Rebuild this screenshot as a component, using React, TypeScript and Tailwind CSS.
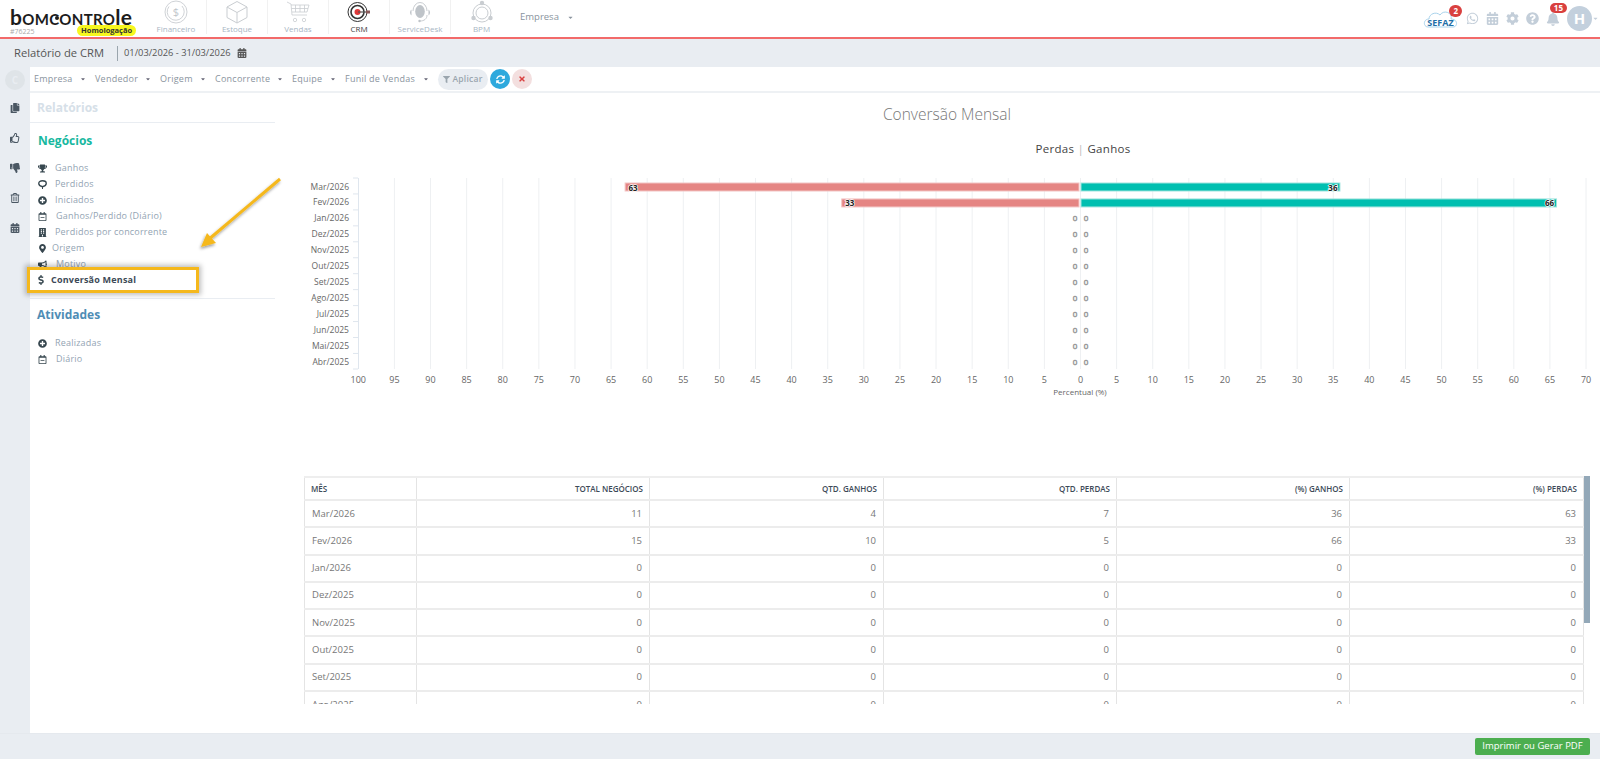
import {
  FaBell, FaBuilding, FaBullhorn, FaCalendarAlt, FaCog, FaCopy, FaDollarSign, FaFilter, FaMapMarkerAlt,
  FaPlusCircle, FaQuestionCircle, FaRegCalendarMinus, FaRegThumbsUp, FaRegTrashAlt,
  FaSyncAlt, FaThumbsDown, FaTimes, FaTrophy, FaWhatsapp, FaCaretDown,
} from "react-icons/fa";

function CoinIcon() {
  return (
    <svg width="24" height="24" viewBox="0 0 24 24" fill="none" stroke="#c9cdd1" strokeWidth="0.9">
      <circle cx="12" cy="12" r="11" />
      <path d="M5 6.5 A8.5 8.5 0 1 0 18 6" />
      <text x="12" y="16" textAnchor="middle" fontSize="11" fill="#c0c5ca" stroke="none">$</text>
    </svg>
  );
}

function BoxIcon() {
  return (
    <svg width="24" height="24" viewBox="0 0 24 24" fill="none" stroke="#c9cdd1" strokeWidth="1">
      <path d="M12 1.5 L22 7 V17.5 L12 23 L2 17.5 V7 Z M2 7 L12 12.5 L22 7 M12 12.5 V23" />
    </svg>
  );
}

function CartIcon() {
  return (
    <svg width="24" height="24" viewBox="0 0 24 24" fill="none" stroke="#c9cdd1" strokeWidth="0.8">
      <path d="M1 2 L5 4 L6 15 H21 M5 5 H23 L21 12 H6 M9.5 5 V12 M14 5 V12 M18.5 5 V12 M5.5 8.5 H22" />
      <circle cx="9" cy="20" r="1.7" />
      <circle cx="18" cy="20" r="1.7" />
    </svg>
  );
}

function TargetIcon() {
  return (
    <svg width="24" height="24" viewBox="0 0 24 24" fill="none">
      <circle cx="10.5" cy="12" r="9.5" stroke="#333" strokeWidth="1" />
      <circle cx="10.5" cy="12" r="6.5" stroke="#333" strokeWidth="1.6" />
      <circle cx="10.5" cy="12" r="3" fill="#e0393a" />
      <path d="M11 12 H21" stroke="#555" strokeWidth="1.2" />
      <path d="M19 10.5 H23 V13.5 H19 Z" fill="#8a5a5a" />
    </svg>
  );
}

function HeadsetIcon() {
  return (
    <svg width="24" height="24" viewBox="0 0 24 24" fill="none">
      <ellipse cx="12" cy="11.5" rx="4.8" ry="6.5" fill="#bfc4c9" />
      <path d="M5 11 A7 8.5 0 0 1 19 11" stroke="#c9cdd1" strokeWidth="1" />
      <path d="M3.5 9.5 C1.5 11 1.5 14 3.5 15.5 Z M20.5 9.5 C22.5 11 22.5 14 20.5 15.5 Z" fill="#bfc4c9" />
      <path d="M19 15 C19 19 16 21 12 21" stroke="#c9cdd1" strokeWidth="1" />
      <circle cx="11.5" cy="21" r="1.2" fill="#bfc4c9" />
    </svg>
  );
}

function RingIcon() {
  return (
    <svg width="24" height="24" viewBox="0 0 24 24" fill="none" stroke="#c9cdd1">
      <circle cx="12" cy="13" r="9" strokeWidth="1" />
      <circle cx="12" cy="13" r="6" strokeWidth="1" />
      <circle cx="12" cy="3" r="2.2" fill="#c9cdd1" stroke="none" />
      <circle cx="3.5" cy="18" r="2.2" fill="#c9cdd1" stroke="none" />
      <circle cx="20.5" cy="18" r="2.2" fill="#c9cdd1" stroke="none" />
    </svg>
  );
}

function BalloonIcon({ className }: { className?: string }) {
  return (
    <svg className={className} viewBox="0 0 12 12" fill="none" stroke="currentColor" strokeWidth="1.8">
      <path d="M6 9 C2.5 8 1 6.5 1 4.5 C1 2.5 3 1 6 1 C9 1 11 2.5 11 4.5 C11 6.5 9.5 8 6 9 Z" />
      <path d="M6 9 V12" strokeWidth="1.4" />
    </svg>
  );
}

const modules = [
  { label: "Financeiro", icon: CoinIcon },
  { label: "Estoque", icon: BoxIcon },
  { label: "Vendas", icon: CartIcon },
  { label: "CRM", icon: TargetIcon, active: true },
  { label: "ServiceDesk", icon: HeadsetIcon },
  { label: "BPM", icon: RingIcon },
];

const filters = [
  { label: "Empresa", w: "w-[61px]" },
  { label: "Vendedor", w: "w-[65px]" },
  { label: "Origem", w: "w-[55px]" },
  { label: "Concorrente", w: "w-[77px]" },
  { label: "Equipe", w: "w-[53px]" },
  { label: "Funil de Vendas", w: "w-[93px]" },
];

const months = ["Mar/2026", "Fev/2026", "Jan/2026", "Dez/2025", "Nov/2025", "Out/2025", "Set/2025", "Ago/2025", "Jul/2025", "Jun/2025", "Mai/2025", "Abr/2025"];

const rows = [
  ["Mar/2026", 11, 4, 7, 36, 63],
  ["Fev/2026", 15, 10, 5, 66, 33],
  ["Jan/2026", 0, 0, 0, 0, 0],
  ["Dez/2025", 0, 0, 0, 0, 0],
  ["Nov/2025", 0, 0, 0, 0, 0],
  ["Out/2025", 0, 0, 0, 0, 0],
  ["Set/2025", 0, 0, 0, 0, 0],
  ["Ago/2025", 0, 0, 0, 0, 0],
];

const negocios = [
  { label: "Ganhos", icon: FaTrophy, gap: "ml-[8px]" },
  { label: "Perdidos", icon: BalloonIcon, gap: "ml-[8px]" },
  { label: "Iniciados", icon: FaPlusCircle, gap: "ml-[8px]" },
  { label: "Ganhos/Perdido (Diário)", icon: FaRegCalendarMinus, gap: "ml-[9px]" },
  { label: "Perdidos por concorrente", icon: FaBuilding, gap: "ml-[8px]" },
  { label: "Origem", icon: FaMapMarkerAlt, gap: "ml-[5px]" },
  { label: "Motivo", icon: FaBullhorn, gap: "ml-[9px]" },
];

const X0 = 776;
const unit = 7.22;
const ticks = [100, 95, 90, 85, 80, 75, 70, 65, 60, 55, 50, 45, 40, 35, 30, 25, 20, 15, 10, 5, 0, 5, 10, 15, 20, 25, 30, 35, 40, 45, 50, 55, 60, 65, 70];

function Chart() {
  return (
    <svg width="1296" height="260" className="block">
      {ticks.map((t, i) => {
        const x = 54.3 + i * 36.11;
        return (
          <g key={i}>
            {i > 0 && <line x1={x} x2={x} y1={8} y2={199} stroke="#eef0f2" />}
            <text x={x} y={213} textAnchor="middle" fontSize="9" fill="#666">{t}</text>
          </g>
        );
      })}
      <line x1={54.5} x2={54.5} y1={8} y2={199} stroke="#dfe6ee" />
      {months.map((m, i) => (
        <g key={m}>
          <line x1={49} x2={54} y1={8 + i * 15.95} y2={8 + i * 15.95} stroke="#dfe6ee" />
          <text x={45} y={19.5 + i * 15.95} textAnchor="end" fontSize="8.5" fill="#666">{m}</text>
          {i > 1 && (
            <>
              <text x={X0 - 5} y={19.5 + i * 15.95} textAnchor="middle" fontSize="8" fill="#fff" stroke="#999" strokeWidth="0.6">0</text>
              <text x={X0 + 6} y={19.5 + i * 15.95} textAnchor="middle" fontSize="8" fill="#fff" stroke="#999" strokeWidth="0.6">0</text>
            </>
          )}
        </g>
      ))}
      <line x1={49} x2={54} y1={199} y2={199} stroke="#dfe6ee" />
      {[[63, 36], [33, 66]].map(([loss, gain], i) => {
        const y = 13 + i * 15.95;
        return (
          <g key={i}>
            <rect x={X0 - loss * unit} y={y} width={loss * unit - 1} height={8} fill="#e58583" stroke="#f2c4c3" strokeWidth="1" />
            <rect x={X0 + 1} y={y} width={gain * unit - 1} height={8} fill="#00bfb0" stroke="#9fe3dd" strokeWidth="1" />
            <text x={X0 - loss * unit + 8} y={y + 7.5} textAnchor="middle" fontSize="8" fontWeight="700" fill="#222" stroke="#fff" strokeWidth="1.4" paintOrder="stroke">{loss}</text>
            <text x={X0 + gain * unit - 7} y={y + 7.5} textAnchor="middle" fontSize="8" fontWeight="700" fill="#222" stroke="#fff" strokeWidth="1.4" paintOrder="stroke">{gain}</text>
          </g>
        );
      })}
      <text x={776} y={225} textAnchor="middle" fontSize="8" fill="#666">Percentual (%)</text>
    </svg>
  );
}

export default function App() {
  return (
    <div className="relative flex h-[759px] w-[1600px] flex-col overflow-hidden bg-[#e9edf2] font-['Open_Sans',sans-serif]">
      <header className="flex h-[39px] shrink-0 items-start border-b-[2px] border-[#f26a6a] bg-white">
        <div className="relative w-[146px] shrink-0 pl-[10px] pt-[6px]">
          <div className="flex items-baseline font-['Lato',sans-serif] text-[21px] font-bold leading-[22px] tracking-[0.3px] text-[#1c1c1c]">
            <span>b</span>
            <span className="[font-variant:small-caps]">om</span>
            <span className="relative [font-variant:small-caps]">
              c
              <span className="absolute left-[6px] top-[10px] size-[4px] rounded-full bg-[#1c1c1c]" />
            </span>
            <span className="[font-variant:small-caps]">ontro</span>
            <span>le</span>
          </div>
          <div className="text-[7px] leading-[8px] text-[#aaa]">#76225</div>
          <div className="absolute left-[77px] top-[25px] rounded-full bg-[#f7f71e] px-[4px] text-[7.5px] font-bold leading-[11px] text-[#333]">Homologação</div>
        </div>
        <nav className="flex">
          {modules.map((m) => (
            <div key={m.label} className="flex h-[34px] w-[61px] flex-col items-center border-r border-[#f1f1f1] last:border-r-0">
              <m.icon />
              <span className={`text-[8px] leading-[10px] ${m.active ? "text-[#444]" : "text-[#a8b6c4]"}`}>{m.label}</span>
            </div>
          ))}
        </nav>
        <div className="ml-[8px] flex items-center gap-[8px] pt-[10px] text-[9.5px] leading-[14px] text-[#8a949e]">
          Empresa
          <FaCaretDown className="size-[7px]" />
        </div>
        <div className="ml-auto flex items-center pt-[6px] text-[#c3ced9]">
          <div className="relative mr-[2px] flex h-[20px] w-[35px] items-end justify-center text-[9px] font-bold leading-[12px] text-[#1f6fa8]">
            <svg className="absolute left-0 top-0" width="35" height="20" viewBox="0 0 35 20" fill="none" stroke="#a9d3ec">
              <path d="M5 18 C0 18 0 10 6 10 C6 5 13 2 17 6 C21 0 30 4 28 10 C35 10 35 18 30 18 Z" />
            </svg>
            <span className="relative">SEFAZ</span>
            <span className="absolute -right-[4px] -top-[4px] rounded-full bg-[#d9403f] px-[4px] text-[8px] font-bold leading-[12px] text-white">2</span>
          </div>
          <FaWhatsapp className="ml-[6px] size-[13px]" />
          <FaCalendarAlt className="ml-[7px] size-[13px]" />
          <FaCog className="ml-[7px] size-[13px]" />
          <FaQuestionCircle className="ml-[7px] size-[13px]" />
          <div className="relative ml-[7px]">
            <FaBell className="size-[14px]" />
            <span className="absolute -right-[7px] -top-[9px] rounded-full bg-[#d9403f] px-[4px] text-[8px] font-bold leading-[10px] text-white">15</span>
          </div>
          <div className="ml-[7px] flex size-[25px] items-center justify-center rounded-full bg-[#c3d0dd] text-[15px] font-bold text-white">H</div>
          <FaCaretDown className="mr-[1px] size-[7px]" />
        </div>
      </header>

      <div className="flex h-[28px] shrink-0 items-center pl-[14px]">
        <span className="text-[11.2px] text-[#555]">Relatório de CRM</span>
        <span className="ml-[13px] h-[15px] border-l border-[#9aa5ad]" />
        <span className="ml-[6px] text-[9.3px] text-[#555]">01/03/2026 - 31/03/2026</span>
        <FaCalendarAlt className="ml-[6px] size-[10px] text-[#555]" />
      </div>

      <div className="flex min-h-0 flex-1">
        <aside className="flex w-[30px] shrink-0 flex-col items-center text-[#4a5763]">
          <div className="mt-[3px] flex size-[20px] items-center justify-center rounded-full bg-[#dfe4e8] text-[10px] font-bold text-[#e9edf2]">C</div>
          <FaCopy className="mt-[13px] size-[10px]" />
          <FaRegThumbsUp className="mt-[20px] size-[10px]" />
          <FaThumbsDown className="mt-[20px] size-[10px]" />
          <FaRegTrashAlt className="mt-[20px] size-[10px]" />
          <FaCalendarAlt className="mt-[20px] size-[10px]" />
        </aside>

        <main className="flex min-w-0 flex-1 flex-col bg-white">
          <div className="flex h-[26px] shrink-0 items-center border-b-[2px] border-[#eef1f4] pl-[4px] text-[9px] tracking-[0.25px] text-[#8a949e]">
            {filters.map((f) => (
              <div key={f.label} className={`flex items-center justify-between pr-[9px] ${f.w}`}>
                {f.label}
                <FaCaretDown className="size-[6px] text-[#667]" />
              </div>
            ))}
            <button className="flex h-[21px] w-[50px] items-center justify-center gap-[2px] rounded-full bg-[#e9edf2] text-[8.5px] font-semibold text-[#9aa5ae]">
              <FaFilter className="size-[7px]" />
              Aplicar
            </button>
            <button className="ml-[2px] flex size-[20px] items-center justify-center rounded-full bg-[#2ea9dd] text-white">
              <FaSyncAlt className="size-[9px]" />
            </button>
            <button className="ml-[2px] flex size-[20px] items-center justify-center rounded-full bg-[#f3dfdf] text-[#d9403f]">
              <FaTimes className="size-[8px]" />
            </button>
          </div>

          <div className="flex min-h-0 flex-1">
            <div className="w-[245px] shrink-0">
              <div className="flex h-[30px] items-center border-b-[1.5px] border-[#e9edf2] pl-[7px] text-[12px] font-bold text-[#d6e0e8]">Relatórios</div>
              <div className="pl-[8px] pt-[6px] text-[12px] font-bold leading-[24px] text-[#17b8a0]">Negócios</div>
              <ul className="relative mt-[7px] flex flex-col text-[9px] leading-[16px] tracking-[0.2px] text-[#93a4b3]">
                {negocios.map((n) => (
                  <li key={n.label} className="flex h-[16px] items-center pl-[8px]">
                    <n.icon className="size-[9px] shrink-0 text-[#37474f]" />
                    <span className={n.gap}>{n.label}</span>
                  </li>
                ))}
                {/* highlight somebody drew over the menu on the print */}
                <li className="relative z-10 -ml-[3px] -mt-[5px] flex h-[26px] w-[172px] items-center border-[3px] border-[#f5b81c] bg-white pl-[6px] text-[9px] font-bold text-[#3d4a57] shadow-[0_0_5px_2px_rgba(0,0,0,0.25)]">
                  <FaDollarSign className="size-[10px] shrink-0 text-[#37474f]" />
                  <span className="ml-[5px]">Conversão Mensal</span>
                </li>
              </ul>
              <div className="mt-[5px] border-t-[1.5px] border-[#e9edf2] pl-[7px] pt-[4px] text-[12px] font-bold leading-[24px] text-[#4f8db5]">Atividades</div>
              <ul className="mt-[8px] flex flex-col text-[9px] leading-[16px] tracking-[0.2px] text-[#93a4b3]">
                <li className="flex h-[16px] items-center pl-[8px]">
                  <FaPlusCircle className="size-[9px] text-[#37474f]" />
                  <span className="ml-[8px]">Realizadas</span>
                </li>
                <li className="flex h-[16px] items-center pl-[8px]">
                  <FaRegCalendarMinus className="size-[9px] text-[#37474f]" />
                  <span className="ml-[9px]">Diário</span>
                </li>
              </ul>
            </div>

            <div className="min-w-0 flex-1 pl-[29px]">
              <div className="h-[77px] pt-[9px]">
                <div className="pr-[10px] text-center text-[15.5px] font-light leading-[24px] text-[#777]">Conversão Mensal</div>
                <div className="pl-[262px] pt-[14px] text-center text-[11.5px] leading-[18px] tracking-[0.3px] text-[#444]">
                  Perdas <span className="text-[#bbb]">|</span> Ganhos
                </div>
              </div>
              <Chart />
              <div className="mt-[46px] flex h-[228px] w-[1286px] overflow-hidden">
                <table className="h-fit w-[1279px] table-fixed border-collapse text-[9.5px] text-[#777]">
                  <colgroup>
                    <col className="w-[112px]" />
                    <col className="w-[233px]" />
                    <col className="w-[234px]" />
                    <col className="w-[233px]" />
                    <col className="w-[233px]" />
                    <col className="w-[234px]" />
                  </colgroup>
                  <thead>
                    <tr className="h-[23px] border border-t-2 border-[#e4e4e4] border-t-[#eeeeee] text-[8px] font-semibold text-[#3d4a57]">
                      {["MÊS", "TOTAL NEGÓCIOS", "QTD. GANHOS", "QTD. PERDAS", "(%) GANHOS", "(%) PERDAS"].map((h, i) => (
                        <th key={h} className={`border-x border-[#e4e4e4] px-[6px] font-semibold ${i === 0 ? "text-left" : "text-right"}`}>{h}</th>
                      ))}
                    </tr>
                  </thead>
                  <tbody>
                    {rows.map((r) => (
                      <tr key={r[0]} className="h-[27.3px] border-t-2 border-[#ececec]">
                        {r.map((c, i) => (
                          <td key={i} className={`border-x border-[#e4e4e4] px-[7px] ${i === 0 ? "text-left" : "text-right"}`}>{c}</td>
                        ))}
                      </tr>
                    ))}
                  </tbody>
                </table>
                <div className="h-[147px] w-[7px] bg-[#93a8b8]" />
              </div>
            </div>
          </div>
        </main>
      </div>

      {/* annotation arrow */}
      <svg className="absolute left-[190px] top-[170px]" width="100" height="90">
        <defs>
          <filter id="s" x="-20%" y="-20%" width="140%" height="140%">
            <feDropShadow dx="-1" dy="2" stdDeviation="1.5" floodColor="#000" floodOpacity="0.4" />
          </filter>
        </defs>
        <g filter="url(#s)">
          <path d="M90 9 L18 70" stroke="#f5b81c" strokeWidth="3" fill="none" />
          <path d="M11 77 L17 63 L26 73 Z" fill="#f5b81c" />
        </g>
      </svg>

      <div className="flex h-[26px] shrink-0 items-center justify-end border-t border-[#e5e9ee] pr-[10px]">
        <button className="h-[17px] w-[115px] rounded-[2px] bg-[#4cae4f] text-[9.5px] text-white">Imprimir ou Gerar PDF</button>
      </div>
    </div>
  );
}
